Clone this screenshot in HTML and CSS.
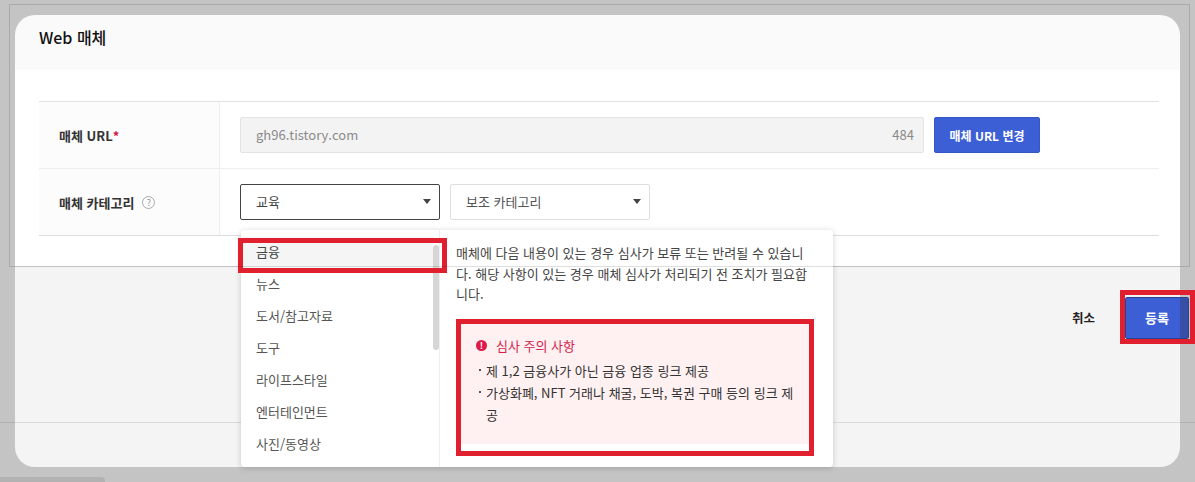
FILE: index.html
```html
<!DOCTYPE html>
<html lang="ko">
<head>
<meta charset="utf-8">
<title>Web 매체</title>
<link rel="stylesheet" href="styles.css">
</head>
<body>
<div class="page-outline"></div>
<section class="modal">
  <header class="modal-head"><h2 class="modal-title">Web 매체</h2></header>
  <div class="modal-body">
    <div class="form">
      <div class="row">
        <div class="label">매체 URL<span class="req">*</span></div>
        <div class="value">
          <div class="input"><span>gh96.tistory.com</span><span>484</span></div>
          <button class="btn-url">매체 URL 변경</button>
        </div>
      </div>
      <div class="row">
        <div class="label">매체 카테고리<span class="help">?</span></div>
        <div class="value">
          <div class="select select-active"><span>교육</span><i class="caret"></i></div>
          <div class="select"><span>보조 카테고리</span><i class="caret"></i></div>
        </div>
      </div>
    </div>
  </div>
  <footer class="modal-foot">
    <button class="btn-cancel">취소</button>
    <button class="btn-submit">등록</button>
  </footer>
  <div class="popup">
    <div class="list-wrap">
      <ul class="list">
        <li class="item item-hover">금융</li>
        <li class="item">뉴스</li>
        <li class="item">도서/참고자료</li>
        <li class="item">도구</li>
        <li class="item">라이프스타일</li>
        <li class="item">엔터테인먼트</li>
        <li class="item">사진/동영상</li>
      </ul>
      <div class="scroll"><div class="thumb"></div></div>
      <div class="mark mark-item"></div>
    </div>
    <div class="info">
      <p class="info-text">매체에 다음 내용이 있는 경우 심사가 보류 또는 반려될 수 있습니다. 해당 사항이 있는 경우 매체 심사가 처리되기 전 조치가 필요합니다.</p>
      <div class="warn-mark">
        <div class="warn">
          <div class="warn-title"><span class="warn-icon">!</span>심사 주의 사항</div>
          <ul class="warn-list">
            <li>제 1,2 금융사가 아닌 금융 업종 링크 제공</li>
            <li>가상화폐, NFT 거래나 채굴, 도박, 복권 구매 등의 링크 제공</li>
          </ul>
        </div>
      </div>
    </div>
  </div>
</section>
<div class="taskbar"></div>
<div class="page-line"></div>
<div class="mark mark-submit"></div>
</body>
</html>
```

FILE: styles.css
```css
* { box-sizing: border-box; }
html, body { margin: 0; padding: 0; }
body {
  position: relative;
  width: 1195px;
  height: 482px;
  overflow: hidden;
  background: #c4c4c4;
  font-family: "Noto Sans CJK KR", "Noto Sans", sans-serif;
  font-size: 13px;
  color: #333;
  padding-top: 15px;
}
ul { list-style: none; margin: 0; padding: 0; }
p { margin: 0; }
button { font-family: inherit; cursor: pointer; }

.page-outline {
  position: absolute;
  left: 9px; top: 4px;
  width: 1181px; height: 263px;
  border: 1px solid rgba(0,0,0,.13);
  z-index: 3;
  pointer-events: none;
}
.page-line {
  position: absolute;
  left: 0; right: 0; top: 422px;
  height: 1px;
  background: rgba(0,0,0,.1);
  z-index: 1;
}
.taskbar {
  width: 105px; height: 5px;
  margin-top: 10px;
  background: #b2b2b2;
  border-top-right-radius: 4px;
}

.modal {
  position: relative;
  width: 1165px;
  height: 452px;
  margin-left: 15px;
  display: flex;
  flex-direction: column;
}
.modal-head {
  height: 55px;
  flex: none;
  background: #fafafa;
  border-radius: 20px 20px 0 0;
  padding: 10px 24px 0;
}
.modal-title {
  margin: 0;
  font-size: 16px;
  font-weight: 500;
  line-height: 24px;
  color: #111;
}
.modal-body {
  height: 196px;
  flex: none;
  background: #fff;
  padding: 31px 21px 0 24px;
}
.form {
  border-top: 1px solid #e2e2e2;
  border-bottom: 1px solid #dedede;
}
.row { display: flex; height: 66px; }
.row + .row { height: 67px; border-top: 1px solid #eee; }
.label {
  width: 181px;
  flex: none;
  background: #fcfcfc;
  border-right: 1px solid #eee;
  padding-left: 20px;
  display: flex;
  align-items: center;
  font-size: 13px;
  font-weight: 700;
  color: #333;
}
.req { color: #c8174a; }
.help {
  width: 13px; height: 13px;
  margin-left: 8px;
  border: 1px solid #aaa;
  border-radius: 50%;
  font-size: 9px;
  font-weight: 400;
  line-height: 11px;
  text-align: center;
  color: #999;
}
.value {
  flex: 1;
  padding-left: 20px;
  display: flex;
  align-items: center;
  gap: 10px;
}
.input {
  width: 684px; height: 36px;
  background: #f3f3f3;
  border: 1px solid #e3e3e3;
  border-radius: 2px;
  padding: 0 9px 1px 15px;
  display: flex;
  align-items: center;
  justify-content: space-between;
  color: #8a8a8a;
  font-size: 13px;
}
.btn-url {
  width: 106px; height: 36px;
  background: #3d5fd6;
  border: 1px solid #3656c4;
  border-radius: 2px;
  color: #fff;
  font-size: 12px;
  font-weight: 700;
  padding: 0;
}
.select {
  width: 200px; height: 36px;
  border: 1px solid #dedede;
  border-radius: 2px;
  background: #fff;
  padding: 0 8px 1px 15px;
  display: flex;
  align-items: center;
  justify-content: space-between;
  color: #555;
}
.select-active { border-color: #444; color: #444; }
.caret {
  width: 0; height: 0;
  border-left: 4px solid transparent;
  border-right: 4px solid transparent;
  border-top: 5px solid #444;
}

.modal-foot {
  flex: 1;
  background: #f4f4f4;
  border-radius: 0 0 20px 20px;
  border-top: 1px solid #ddd;
  padding-top: 30px;
  display: flex;
  justify-content: flex-end;
  align-items: flex-start;
  gap: 30px;
}
.btn-cancel {
  height: 40px;
  padding: 0;
  background: none;
  border: 0;
  font-size: 12.5px;
  font-weight: 700;
  color: #222;
}
.btn-submit {
  width: 64px; height: 42px;
  margin-right: -9px;
  border: 1px solid #2c4290;
  border-radius: 2px;
  background: linear-gradient(to right, #3d5fd6 54px, #374fa6 54px);
  color: #fff;
  font-size: 13px;
  font-weight: 700;
  padding: 0 0 2px;
}

.popup {
  position: absolute;
  left: 226px; top: 215px;
  width: 592px; height: 237px;
  background: #fff;
  border-radius: 4px;
  box-shadow: 0 1px 6px rgba(0,0,0,.18);
  display: flex;
  z-index: 2;
}
.list-wrap {
  position: relative;
  width: 199px;
  flex: none;
  border-right: 1px solid #eee;
  padding-top: 7px;
  display: flex;
}
.list { flex: 1; }
.item {
  height: 32px;
  padding-left: 15px;
  line-height: 29px;
  color: #555;
}
.item-hover { background: #f5f5f5; color: #444; }
.scroll { width: 6px; flex: none; }
.thumb {
  width: 6px; height: 105px;
  margin-top: 8px;
  background: #d6d6d6;
  border-radius: 3px;
}
.info { flex: 1; padding: 13px 19px 0 16px; }
.info-text {
  width: 356px;
  font-size: 13px;
  line-height: 20.5px;
  color: #444;
  word-break: break-all;
}
.warn-mark {
  width: 358px; height: 137px;
  margin-top: 14px;
  border: 5px solid #e0202e;
  background: #fff;
}
.warn {
  height: 120px;
  background: #fff0f1;
  padding: 12px 15px 0 15px;
}
.warn-title {
  display: flex;
  align-items: center;
  color: #d41f4d;
  font-size: 13px;
  line-height: 19px;
}
.warn-icon {
  width: 11px; height: 11px;
  margin-right: 9px;
  background: #dd1a48;
  border-radius: 50%;
  color: #fff;
  font-size: 9px;
  font-weight: 700;
  line-height: 11px;
  text-align: center;
}
.warn-list { margin-top: 5px; }
.warn-list li {
  position: relative;
  padding-left: 10px;
  font-size: 13px;
  line-height: 22px;
  color: #333;
  word-break: break-all;
}
.warn-list li::before {
  content: "";
  position: absolute;
  left: 3px; top: 9px;
  width: 2px; height: 2px;
  background: #555;
}

.mark { position: absolute; border: 5px solid #e0202e; pointer-events: none; z-index: 4; }
.mark-item { left: -3px; top: 8px; width: 209px; height: 35px; }
.mark-submit { left: 1120px; top: 290px; width: 75px; height: 54px; }
```
